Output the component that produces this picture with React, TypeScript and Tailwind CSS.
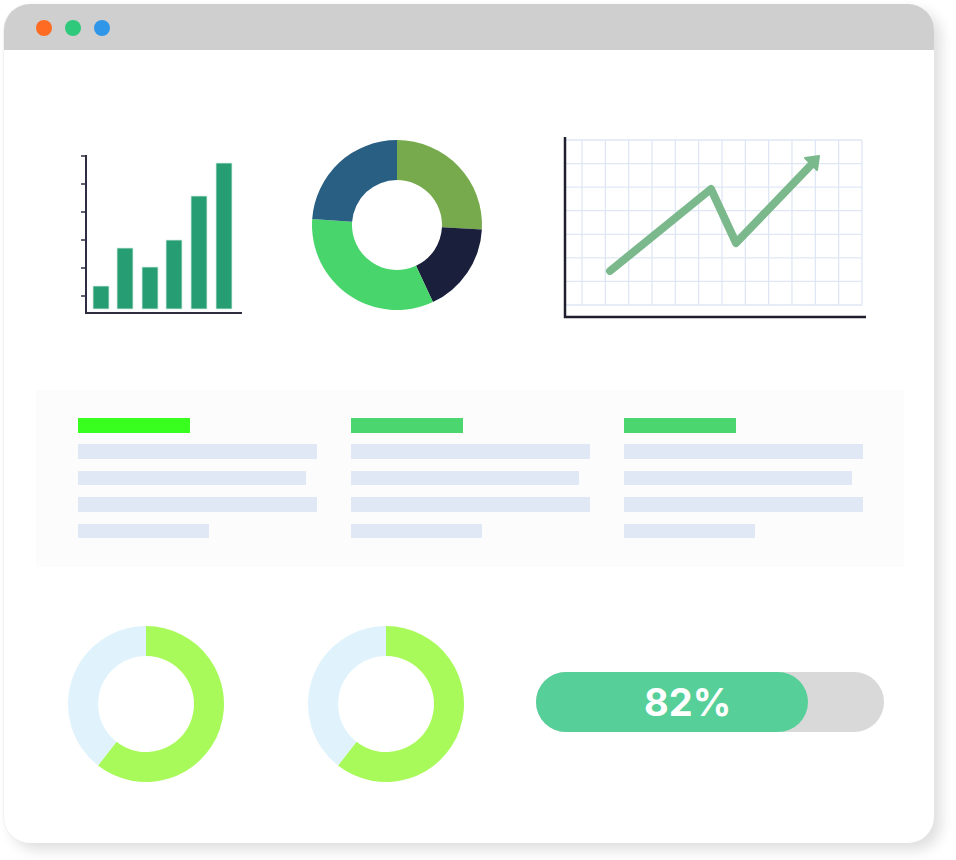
import React from "react";

const polar = (cx: number, cy: number, r: number, deg: number) => {
  const a = ((deg - 90) * Math.PI) / 180;
  return [cx + r * Math.cos(a), cy + r * Math.sin(a)];
};

// ring segment, angles measured clockwise from 12 o'clock
const arc = (cx: number, cy: number, R: number, r: number, s: number, e: number) => {
  const [x1, y1] = polar(cx, cy, R, s);
  const [x2, y2] = polar(cx, cy, R, e);
  const [x3, y3] = polar(cx, cy, r, e);
  const [x4, y4] = polar(cx, cy, r, s);
  const big = e - s > 180 ? 1 : 0;
  return `M${x1} ${y1} A${R} ${R} 0 ${big} 1 ${x2} ${y2} L${x3} ${y3} A${r} ${r} 0 ${big} 0 ${x4} ${y4} Z`;
};

const bars = [
  { x: 17, top: 149 },
  { x: 41, top: 111 },
  { x: 66, top: 130 },
  { x: 90, top: 103 },
  { x: 115, top: 59 },
  { x: 140, top: 26 },
];

const BarChart = () => (
  <svg width="170" height="180" viewBox="0 0 170 180" className="shrink-0">
    {bars.map((b) => (
      <rect key={b.x} x={b.x} y={b.top} width="16" height={172 - b.top} fill="#279d74" stroke="#d7eee5" strokeWidth="0.8" />
    ))}
    {[19, 47, 75, 103, 131, 159].map((y) => (
      <line key={y} x1="5" y1={y} x2="10" y2={y} stroke="#2d2d3f" strokeWidth="1.5" />
    ))}
    <line x1="10" y1="18" x2="10" y2="177" stroke="#2d2d3f" strokeWidth="2" />
    <line x1="9" y1="176" x2="166" y2="176" stroke="#2d2d3f" strokeWidth="2" />
  </svg>
);

const PieChart = () => (
  <svg width="180" height="180" viewBox="0 0 180 180" className="shrink-0">
    <path d={arc(90, 88, 85, 45, 0, 93)} fill="#77a94d" />
    <path d={arc(90, 88, 85, 45, 93, 155)} fill="#1a1f3b" />
    <path d={arc(90, 88, 85, 45, 155, 274)} fill="#48d56c" />
    <path d={arc(90, 88, 85, 45, 274, 360)} fill="#285f82" />
  </svg>
);

const LineChart = () => (
  <svg width="310" height="183" viewBox="0 0 310 183" className="shrink-0">
    {Array.from({ length: 13 }).map((_, i) => (
      <line key={"v" + i} x1={22 + i * 23.33} y1="3" x2={22 + i * 23.33} y2="168" stroke="#dfe7f5" strokeWidth="1.3" />
    ))}
    {Array.from({ length: 8 }).map((_, j) => (
      <line key={"h" + j} x1="6" y1={3 + j * 23.57} x2="302" y2={3 + j * 23.57} stroke="#dfe7f5" strokeWidth="1.3" />
    ))}
    <polyline
      points="50,134 151,52 176,106 251,28"
      fill="none"
      stroke="#7bb98d"
      strokeWidth="8"
      strokeLinecap="round"
      strokeLinejoin="round"
    />
    <polygon points="259,19 245,21 257,33" fill="#7bb98d" stroke="#7bb98d" strokeWidth="2" strokeLinejoin="round" />
    <line x1="5" y1="0" x2="5" y2="181" stroke="#1f1f2e" strokeWidth="2.5" />
    <line x1="4" y1="180" x2="306" y2="180" stroke="#1f1f2e" strokeWidth="2.5" />
  </svg>
);

const Ring = () => (
  <svg width="160" height="160" viewBox="0 0 160 160" className="shrink-0">
    <path d={arc(80, 80, 78, 48, 0, 218)} fill="#a8fa5a" />
    <path d={arc(80, 80, 78, 48, 218, 360)} fill="#e0f3fd" />
  </svg>
);

const TextBlock = ({ head }: { head: string }) => (
  <div className="flex flex-col w-[239px]">
    <div className={`h-[15px] w-[112px] ${head}`} />
    <div className="h-[15px] w-[239px] bg-[#e1e8f5] mt-[11px]" />
    <div className="h-[14px] w-[228px] bg-[#e1e8f5] mt-[12px]" />
    <div className="h-[15px] w-[239px] bg-[#e1e8f5] mt-[12px]" />
    <div className="h-[14px] w-[131px] bg-[#e1e8f5] mt-[12px]" />
  </div>
);

export default function App() {
  return (
    <div className="w-[956px] h-[860px] bg-white pt-[4px] pl-[4px]">
      <div className="w-[930px] h-[839px] bg-white rounded-[26px] overflow-hidden shadow-[7px_7px_14px_rgba(0,0,0,0.13),-1px_0_1px_rgba(0,0,0,0.04)] flex flex-col">
        <div className="h-[46px] bg-[#cfcfcf] flex items-center gap-[13px] pl-[32px] pt-[2px] shrink-0">
          <span className="w-[16px] h-[16px] rounded-full bg-[#ff6b22]" />
          <span className="w-[16px] h-[16px] rounded-full bg-[#2ec97a]" />
          <span className="w-[16px] h-[16px] rounded-full bg-[#3096e8]" />
        </div>

        <div className="flex items-start mt-[87px] ml-[72px]">
          <BarChart />
          <div className="ml-[61px]">
            <PieChart />
          </div>
          <div className="ml-[73px]">
            <LineChart />
          </div>
        </div>

        <div className="mt-[70px] ml-[32px] w-[868px] h-[177px] bg-[#fcfcfd] pl-[42px] pt-[28px] flex gap-[34px]">
          <TextBlock head="bg-[#39ff1f]" />
          <TextBlock head="bg-[#4cd670]" />
          <TextBlock head="bg-[#4cd670]" />
        </div>

        <div className="flex items-center mt-[57px] ml-[62px]">
          <Ring />
          <div className="ml-[80px]">
            <Ring />
          </div>
          <div className="ml-[70px] -mt-[4px] w-[348px] h-[60px] rounded-full bg-[#d9d9d9] flex">
            <div className="w-[272px] h-full rounded-full bg-[#56cf98] flex items-center pl-[108px]">
              <span className="text-white font-bold text-[38px] leading-none font-['Inter',sans-serif]">82%</span>
            </div>
          </div>
        </div>
      </div>
    </div>
  );
}
